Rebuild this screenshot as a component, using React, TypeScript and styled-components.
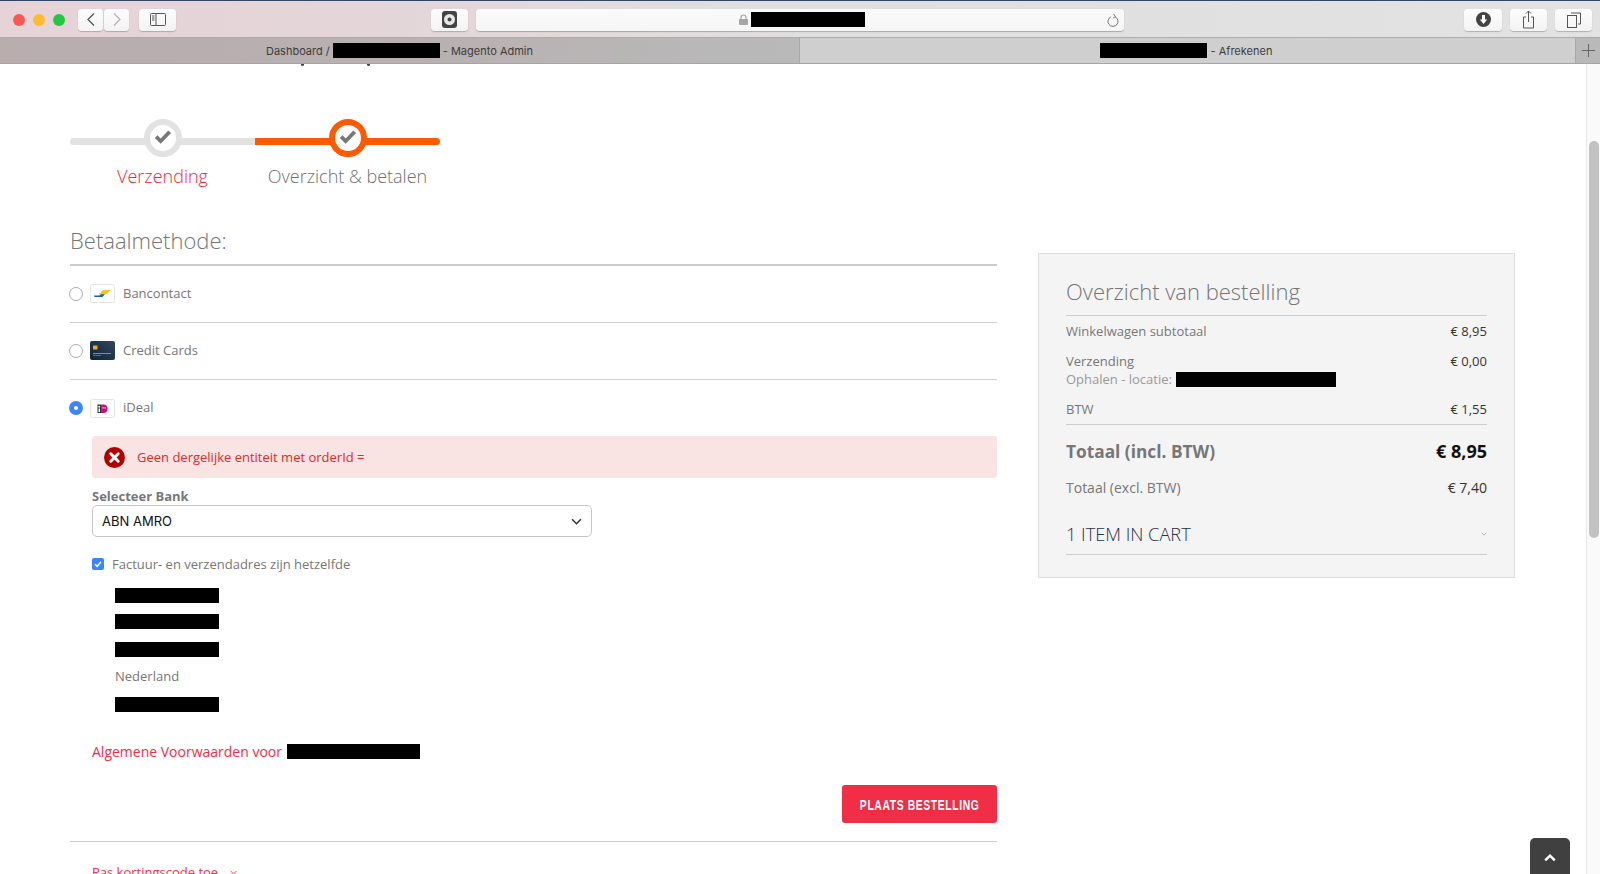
import React from 'react';
import styled, { createGlobalStyle } from 'styled-components';

const GlobalStyle = createGlobalStyle`
  html, body {
    margin: 0;
    padding: 0;
    height: 100%;
    overflow: hidden;
    background: #fff;
  }
  * { box-sizing: border-box; }
`;

const red = '#f22e46';
const orange = '#ff5a00';
const grey = '#777777';
const open = `'Open Sans', 'Liberation Sans', sans-serif`;

const Window = styled.div`
  width: 1600px;
  height: 874px;
  display: flex;
  flex-direction: column;
  overflow: hidden;
  position: relative;
  font-family: ${open};
  font-size: 13px;
  color: ${grey};
`;

/* browser chrome */
const Toolbar = styled.div`
  height: 38px;
  flex: none;
  display: flex;
  align-items: center;
  padding: 1px 8px 0 13px;
  border-top: 1px solid #33455f;
  border-bottom: 1px solid #b3a9aa;
  background: linear-gradient(90deg, #e6d3d7 0%, #e3d6d8 25%, #e0dfdf 50%, #e2e2e2 100%);
`;

const Lights = styled.div`
  display: flex;
  gap: 8px;
  margin-right: 13px;
`;

const Light = styled.span<{ $c: string }>`
  width: 12px;
  height: 12px;
  border-radius: 50%;
  background: ${(p) => p.$c};
`;

const ToolButton = styled.div<{ $w: number; $mr?: number }>`
  width: ${(p) => p.$w}px;
  height: 22px;
  flex: none;
  margin-right: ${(p) => p.$mr ?? 0}px;
  display: flex;
  align-items: center;
  justify-content: center;
  background: linear-gradient(#fdfdfd, #f3f3f3);
  border-radius: 4px;
  box-shadow: 0 1px 1px rgba(0, 0, 0, 0.22);
`;

const UrlBar = styled.div`
  width: 648px;
  height: 22px;
  flex: none;
  margin-right: 340px;
  display: flex;
  align-items: center;
  position: relative;
  padding-left: 263px;
  background: linear-gradient(#fafafa, #f6f6f6);
  border-radius: 4px;
  box-shadow: 0 1px 1px rgba(0, 0, 0, 0.25);
`;

const LockIcon = styled.svg`
  margin-right: 3px;
`;

const Reload = styled.span`
  position: absolute;
  right: 4px;
  top: 4px;
  display: flex;
`;

const Redacted = styled.span<{ $w: number }>`
  display: inline-block;
  flex: none;
  width: ${(p) => p.$w}px;
  height: 15px;
  background: #000;
  vertical-align: middle;
`;

const TabBar = styled.div`
  height: 26px;
  flex: none;
  display: flex;
  font-family: Inter, 'Liberation Sans', sans-serif;
  font-size: 11px;
  color: #3c3c3c;
  border-bottom: 1px solid #a8a4a4;
`;

const Tab = styled.div<{ $active?: boolean }>`
  flex: ${(p) => (p.$active ? '0 0 776px' : '0 0 800px')};
  display: flex;
  align-items: center;
  justify-content: center;
  gap: ${(p) => (p.$active ? 4 : 3)}px;
  padding-right: ${(p) => (p.$active ? 3 : 0)}px;
  background: ${(p) =>
    p.$active ? '#cfcfcf' : 'linear-gradient(90deg, #b9adae 0%, #b8b0b1 50%, #b9b9b9 100%)'};
  border-right: 1px solid #a9a9a9;
`;

const NewTab = styled.div`
  flex: 1;
  display: flex;
  align-items: center;
  justify-content: center;
  background: #b9b9b9;
  color: #666;
`;

/* page */
const Viewport = styled.div`
  flex: 1;
  min-height: 0;
  display: flex;
`;

const Page = styled.div`
  flex: 1;
  min-width: 0;
  padding-left: 70px;
  background: #fff;
`;

const ScrollTrack = styled.div`
  width: 14px;
  flex: none;
  padding: 77px 1px 0 2px;
  background: #fafafa;
  border-left: 1px solid #e8e8e8;
`;

const ScrollThumb = styled.div`
  height: 397px;
  border-radius: 5px;
  background: #c2c2c2;
`;

const ClippedTitle = styled.div`
  height: 3px;
  display: flex;
  padding-left: 231px;
  gap: 63px;
`;

const Descender = styled.span`
  width: 3px;
  height: 2px;
  background: #444;
  border-radius: 0 0 2px 2px;
`;

const Columns = styled.div`
  display: flex;
  gap: 41px;
  align-items: flex-start;
`;

const LeftColumn = styled.div`
  width: 927px;
  flex: none;
`;

const Stepper = styled.div`
  width: 370px;
  margin-top: 52px;
  display: flex;
`;

const Step = styled.div`
  width: 185px;
  display: flex;
  flex-direction: column;
  align-items: center;
`;

const StepHead = styled.div`
  height: 38px;
  width: 100%;
  position: relative;
  display: flex;
  align-items: center;
  justify-content: center;
`;

const StepBar = styled.span<{ $on?: boolean }>`
  position: absolute;
  left: 0;
  right: 0;
  top: 19px;
  height: 7px;
  background: ${(p) => (p.$on ? orange : '#e2e2e2')};
  border-radius: ${(p) => (p.$on ? '0 4px 4px 0' : '4px 0 0 4px')};
`;

const StepCircle = styled.span<{ $on?: boolean }>`
  position: relative;
  width: 38px;
  height: 38px;
  border-radius: 50%;
  background: #fff;
  border: 6px solid ${(p) => (p.$on ? orange : '#e2e2e2')};
  display: flex;
  align-items: center;
  justify-content: center;
  padding-bottom: 3px;
`;

const StepLabel = styled.div<{ $on?: boolean }>`
  margin-top: 6px;
  font-size: 18px;
  line-height: 26px;
  font-weight: 300;
  color: ${(p) => (p.$on ? '#f01f3a' : '#6f6f6f')};
`;

const SectionTitle = styled.div`
  margin-top: 35px;
  height: 42px;
  line-height: 32px;
  font-size: 22px;
  font-weight: 300;
  color: #757575;
  border-bottom: 2px solid #cccccc;
`;

const MethodRow = styled.div<{ $last?: boolean }>`
  height: ${(p) => (p.$last ? 56 : 57)}px;
  display: flex;
  align-items: center;
  padding-bottom: ${(p) => (p.$last ? 0 : 1)}px;
  border-bottom: ${(p) => (p.$last ? 'none' : '1px solid #d1d1d1')};
`;

const Radio = styled.span<{ $checked?: boolean }>`
  width: 14px;
  height: 14px;
  flex: none;
  border-radius: 50%;
  border: ${(p) => (p.$checked ? '5px solid #3b86ff' : '1px solid #adadad')};
  background: #fff;
  margin: 0 7px 0 -1px;
`;

const LogoBox = styled.span`
  width: 25px;
  height: 19px;
  flex: none;
  margin-right: 8px;
  display: flex;
`;

const MethodLabel = styled.span`
  margin-top: -2px;
  line-height: 18px;
`;

const Indent = styled.div`
  padding-left: 22px;
`;

const ErrorBox = styled.div`
  height: 42px;
  display: flex;
  align-items: center;
  gap: 12px;
  padding-left: 12px;
  border-radius: 3px;
  background: #f9e3e3;
  color: #e02b27;
`;

const FieldLabel = styled.div`
  margin-top: 10px;
  height: 17px;
  line-height: 17px;
  font-weight: 700;
  color: #777;
`;

const SelectBox = styled.div`
  width: 500px;
  height: 32px;
  display: flex;
  align-items: center;
  justify-content: space-between;
  padding: 0 9px 0 9px;
  background: #fff;
  border: 1px solid #c6c6c6;
  border-radius: 5px;
  color: #111;
  font-family: Inter, 'Liberation Sans', sans-serif;
`;

const CheckRow = styled.div`
  margin-top: 21px;
  height: 12px;
  display: flex;
  align-items: center;
  gap: 8px;
`;

const CheckBox = styled.span`
  width: 12px;
  height: 12px;
  flex: none;
  display: flex;
  border-radius: 2px;
  background: #3b86ff;
`;

const Address = styled.div`
  padding: 17px 0 0 23px;
`;

const AddressLine = styled.div<{ $mt?: number }>`
  height: 15px;
  line-height: 15px;
  margin-top: ${(p) => p.$mt ?? 0}px;
`;

const TermsLink = styled.div`
  margin-top: 30px;
  height: 20px;
  display: flex;
  align-items: center;
  gap: 5px;
  font-size: 14px;
  color: ${red};
`;

const Actions = styled.div`
  margin-top: 24px;
  display: flex;
  justify-content: flex-end;
`;

const PlaceOrder = styled.button`
  width: 155px;
  height: 38px;
  display: flex;
  align-items: center;
  justify-content: center;
  border: none;
  border-radius: 3px;
  padding: 0;
  background: ${red};
  color: #fff;
  font-family: 'Liberation Sans', sans-serif;
  font-size: 15px;
  font-weight: 700;
  white-space: nowrap;
`;

const CondensedText = styled.span`
  flex: none;
  letter-spacing: 0.9px;
  transform: scaleX(0.69);
`;

const FootRule = styled.div`
  margin-top: 18px;
  height: 1px;
  background: #cccccc;
`;

const Coupon = styled.div`
  margin: 20px 0 0 22px;
  display: flex;
  align-items: center;
  gap: 12px;
  line-height: 20px;
  color: ${red};
`;

/* order summary */
const Summary = styled.aside`
  width: 477px;
  flex: none;
  margin-top: 186px;
  padding: 23px 27px 22px;
  background: #f4f4f4;
  border: 1px solid #dddddd;
`;

const SummaryTitle = styled.div`
  height: 38px;
  line-height: 28px;
  font-size: 22px;
  font-weight: 300;
  color: #757575;
`;

const Rule = styled.div`
  height: 1px;
  background: #cccccc;
`;

const Row = styled.div<{ $mt: number }>`
  display: flex;
  justify-content: space-between;
  margin-top: ${(p) => p.$mt}px;
  line-height: 18px;
`;

const Amount = styled.span`
  color: #333;
`;

const SubLine = styled.div`
  display: flex;
  align-items: center;
  gap: 4px;
  line-height: 18px;
  color: #999;
`;

const RuleRow = styled.div`
  margin-top: 6px;
`;

const TotalRow = styled(Row)`
  align-items: baseline;
  line-height: 26px;
  font-size: 18px;
  font-weight: 700;
`;

const TotalLabel = styled.span`
  font-size: 17.3px;
`;

const TotalAmount = styled.span`
  color: #111;
`;

const ExclRow = styled(Row)`
  font-size: 14px;
`;

const CartRow = styled.div`
  margin-top: 24px;
  padding-bottom: 7px;
  display: flex;
  justify-content: space-between;
  align-items: center;
  line-height: 26px;
  font-size: 18.2px;
  font-weight: 300;
  color: #26324a;
`;

const ToTop = styled.div`
  position: absolute;
  left: 1530px;
  top: 838px;
  width: 40px;
  height: 36px;
  display: flex;
  align-items: center;
  justify-content: center;
  padding-top: 4px;
  border-radius: 5px 5px 0 0;
  background: #404040;
`;

const Chevron = ({ size = 10, color = '#333', width = 1.4, up = false }: { size?: number; color?: string; width?: number; up?: boolean }) => (
  <svg width={size} height={size} viewBox="0 0 10 10" fill="none" stroke={color} strokeWidth={width}>
    <path d={up ? 'M1 7l4-4 4 4' : 'M1 3l4 4 4-4'} />
  </svg>
);

const StepCheck = () => (
  <svg width="18" height="14" viewBox="0 0 17 14" fill="#777">
    <path d="M6.2 13.8L.3 8 3 5.200l3.200 3.200L13.800.4l2.800 2.600z" />
  </svg>
);

const Bancontact = () => (
  <svg width="25" height="19" viewBox="0 0 25 19">
    <rect x=".5" y=".5" width="24" height="18" rx="2" fill="#fff" stroke="#e4e4e4" />
    <path d="M4 11.500c0 1 .5 1.500 1.500 1.500h7l2.500-3H11l-1.500 1.500z" fill="#1b5fa8" />
    <path d="M8.500 9.500c2 0 2.500-1 3.500-2.500l1-1h7.500l-3 3.500c-.5.600-1 .8-2 .8h-6z" fill="#f6c61a" />
  </svg>
);

const CreditCard = () => (
  <svg width="25" height="19" viewBox="0 0 25 19">
    <defs>
      <linearGradient id="cc" x1="0" y1="1" x2="1" y2="0">
        <stop offset="0" stopColor="#0f2338" />
        <stop offset="1" stopColor="#31485f" />
      </linearGradient>
    </defs>
    <rect width="25" height="19" rx="2" fill="url(#cc)" />
    <rect x="3" y="4.500" width="4.500" height="4" rx=".6" fill="#e9a93c" />
    <rect x="3" y="12" width="18" height=".8" fill="#9aa6b2" />
    <rect x="3" y="14" width="8" height=".8" fill="#6f7e8d" />
  </svg>
);

const Ideal = () => (
  <svg width="25" height="19" viewBox="0 0 25 19">
    <rect x=".5" y=".5" width="24" height="18" rx="2" fill="#fff" stroke="#e4e4e4" />
    <rect x="7.500" y="5.500" width="3.500" height="8.500" fill="#333" />
    <path d="M11 5.500h2.500c2.700 0 4 1.900 4 4.200s-1.300 4.300-4 4.300H11z" fill="#d5087f" />
    <rect x="8.500" y="9.500" width="1.500" height="3.500" fill="#fff" />
    <circle cx="9.200" cy="7.800" r="1" fill="#fff" />
    <rect x="12" y="8.500" width="4" height=".8" fill="#fff" />
  </svg>
);

const ErrorIcon = () => (
  <svg width="21" height="21" viewBox="0 0 21 21">
    <circle cx="10.5" cy="10.5" r="10.500" fill="#b30000" />
    <path d="M6.800 6.800l7.400 7.400M14.200 6.800l-7.400 7.400" stroke="#fff" strokeWidth="3" strokeLinecap="round" />
  </svg>
);

export default function App() {
  return (
    <Window>
      <GlobalStyle />
      <Toolbar>
        <Lights>
          <Light $c="#fc5753" />
          <Light $c="#fdbc2e" />
          <Light $c="#26c73f" />
        </Lights>
        <ToolButton $w={25} $mr={1}>
          <svg width="10" height="15" viewBox="0 0 10 15" fill="none" stroke="#555" strokeWidth="1.300">
            <path d="M8 1.500L2 7.500l6 6" />
          </svg>
        </ToolButton>
        <ToolButton $w={25} $mr={10}>
          <svg width="10" height="15" viewBox="0 0 10 15" fill="none" stroke="#b5b5b5" strokeWidth="1.300">
            <path d="M2 1.500l6 6-6 6" />
          </svg>
        </ToolButton>
        <ToolButton $w={37} $mr={255}>
          <svg width="16" height="13" viewBox="0 0 16 13" fill="none" stroke="#555">
            <rect x=".5" y=".5" width="15" height="12" rx="1" />
            <path d="M6 .5v12M2 3h2.500M2 5h2.500M2 7h2.500" />
          </svg>
        </ToolButton>
        <ToolButton $w={37} $mr={8}>
          <svg width="15" height="17" viewBox="0 0 15 17">
            <rect width="15" height="17" rx="3" fill="#444" />
            <circle cx="7.500" cy="8.500" r="5.500" fill="#e8e8e8" />
            <circle cx="7.500" cy="8.500" r="2" fill="#444" />
          </svg>
        </ToolButton>
        <UrlBar>
          <LockIcon width="9" height="11" viewBox="0 0 9 11">
            <path d="M2 5V3.500a2.500 2.500 0 0 1 5 0V5" fill="none" stroke="#a5a5a5" strokeWidth="1.200" />
            <rect y="5" width="9" height="6" rx="1" fill="#a5a5a5" />
          </LockIcon>
          <Redacted $w={114} />
          <Reload>
            <svg width="13" height="15" viewBox="0 0 13 15" fill="none" stroke="#777">
              <path d="M4 3.800a5 5 0 1 0 4 0" />
              <path d="M6.500 1l2 2.500-2.500 1.500" />
            </svg>
          </Reload>
        </UrlBar>
        <ToolButton $w={38} $mr={8}>
          <svg width="15" height="15" viewBox="0 0 15 15">
            <circle cx="7.500" cy="7.500" r="7.500" fill="#444" />
            <path d="M6 3h3v4.500h2.200L7.500 12 3.800 7.500H6z" fill="#fff" />
          </svg>
        </ToolButton>
        <ToolButton $w={37} $mr={8}>
          <svg width="13" height="19" viewBox="0 0 13 19" fill="none" stroke="#555">
            <path d="M4 7H1.500v11h10V7H9M6.500 12V1M4 3.500L6.500 1 9 3.500" />
          </svg>
        </ToolButton>
        <ToolButton $w={37}>
          <svg width="14" height="16" viewBox="0 0 14 16" fill="none" stroke="#555">
            <rect x=".5" y="3.500" width="9" height="12" />
            <path d="M4 1h9.500v11H11" />
          </svg>
        </ToolButton>
      </Toolbar>
      <TabBar>
        <Tab>
          <span>Dashboard /</span>
          <Redacted $w={107} />
          <span>- Magento Admin</span>
        </Tab>
        <Tab $active>
          <Redacted $w={107} />
          <span>- Afrekenen</span>
        </Tab>
        <NewTab>
          <svg width="13" height="13" viewBox="0 0 13 13" stroke="#666">
            <path d="M6.500 0v13M0 6.500h13" />
          </svg>
        </NewTab>
      </TabBar>
      <Viewport>
        <Page>
          <ClippedTitle>
            <Descender />
            <Descender />
          </ClippedTitle>
          <Columns>
            <LeftColumn>
              <Stepper>
                <Step>
                  <StepHead>
                    <StepBar />
                    <StepCircle>
                      <StepCheck />
                    </StepCircle>
                  </StepHead>
                  <StepLabel $on>Verzending</StepLabel>
                </Step>
                <Step>
                  <StepHead>
                    <StepBar $on />
                    <StepCircle $on>
                      <StepCheck />
                    </StepCircle>
                  </StepHead>
                  <StepLabel>Overzicht &amp; betalen</StepLabel>
                </Step>
              </Stepper>
              <SectionTitle>Betaalmethode:</SectionTitle>
              <MethodRow>
                <Radio />
                <LogoBox>
                  <Bancontact />
                </LogoBox>
                <MethodLabel>Bancontact</MethodLabel>
              </MethodRow>
              <MethodRow>
                <Radio />
                <LogoBox>
                  <CreditCard />
                </LogoBox>
                <MethodLabel>Credit Cards</MethodLabel>
              </MethodRow>
              <MethodRow $last>
                <Radio $checked />
                <LogoBox>
                  <Ideal />
                </LogoBox>
                <MethodLabel>iDeal</MethodLabel>
              </MethodRow>
              <Indent>
                <ErrorBox>
                  <ErrorIcon />
                  <span>Geen dergelijke entiteit met orderId =</span>
                </ErrorBox>
                <FieldLabel>Selecteer Bank</FieldLabel>
                <SelectBox>
                  <span>ABN AMRO</span>
                  <Chevron size={11} />
                </SelectBox>
                <CheckRow>
                  <CheckBox>
                    <svg width="12" height="12" viewBox="0 0 12 12" fill="none" stroke="#fff" strokeWidth="1.600">
                      <path d="M3 6.200l2.200 2.200L9 3.800" />
                    </svg>
                  </CheckBox>
                  <span>Factuur- en verzendadres zijn hetzelfde</span>
                </CheckRow>
                <Address>
                  <AddressLine>
                    <Redacted $w={104} />
                  </AddressLine>
                  <AddressLine $mt={11}>
                    <Redacted $w={104} />
                  </AddressLine>
                  <AddressLine $mt={13}>
                    <Redacted $w={104} />
                  </AddressLine>
                  <AddressLine $mt={13}>Nederland</AddressLine>
                  <AddressLine $mt={12}>
                    <Redacted $w={104} />
                  </AddressLine>
                </Address>
                <TermsLink>
                  <span>Algemene Voorwaarden voor</span>
                  <Redacted $w={133} />
                </TermsLink>
                <Actions>
                  <PlaceOrder>
                    <CondensedText>PLAATS BESTELLING</CondensedText>
                  </PlaceOrder>
                </Actions>
              </Indent>
              <FootRule />
              <Coupon>
                <span>Pas kortingscode toe</span>
                <Chevron size={7} color={red} />
              </Coupon>
            </LeftColumn>
            <Summary>
              <SummaryTitle>Overzicht van bestelling</SummaryTitle>
              <Rule />
              <Row $mt={6}>
                <span>Winkelwagen subtotaal</span>
                <Amount>€ 8,95</Amount>
              </Row>
              <Row $mt={12}>
                <span>Verzending</span>
                <Amount>€ 0,00</Amount>
              </Row>
              <SubLine>
                <span>Ophalen - locatie:</span>
                <Redacted $w={160} />
              </SubLine>
              <Row $mt={12}>
                <span>BTW</span>
                <Amount>€ 1,55</Amount>
              </Row>
              <RuleRow>
                <Rule />
              </RuleRow>
              <TotalRow $mt={13}>
                <TotalLabel>Totaal (incl. BTW)</TotalLabel>
                <TotalAmount>€ 8,95</TotalAmount>
              </TotalRow>
              <ExclRow $mt={14}>
                <span>Totaal (excl. BTW)</span>
                <Amount>€ 7,40</Amount>
              </ExclRow>
              <CartRow>
                <span>1 ITEM IN CART</span>
                <Chevron size={6} color="#888" width={1} />
              </CartRow>
              <Rule />
            </Summary>
          </Columns>
        </Page>
        <ScrollTrack>
          <ScrollThumb />
        </ScrollTrack>
      </Viewport>
      <ToTop>
        <Chevron size={12} color="#fff" width={2} up />
      </ToTop>
    </Window>
  );
}
